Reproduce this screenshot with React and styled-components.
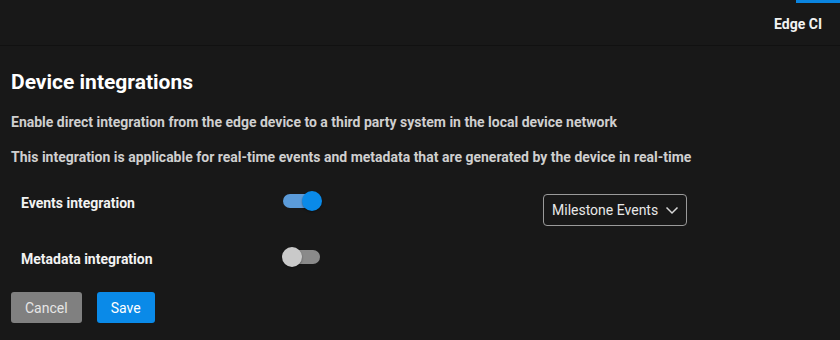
import React from "react";
import styled, { createGlobalStyle } from "styled-components";

const Global = createGlobalStyle`
  html, body { margin: 0; padding: 0; background: #181818; }
  body { font-family: Roboto, "Noto Sans", sans-serif; color: #fff; }
  * { box-sizing: border-box; }
`;

const Page = styled.div`
  width: 840px;
  height: 340px;
  background: #181818;
  overflow: hidden;
`;

const Header = styled.header`
  height: 46px;
  display: flex;
  justify-content: flex-end;
  border-bottom: 1px solid #111;
`;

const Tab = styled.div`
  position: relative;
  padding: 16px 18px 0 15px;
  font-size: 14px;
  font-weight: 700;
  color: #f2f2f2;
  &::before {
    content: "";
    position: absolute;
    top: 0;
    left: 37px;
    right: 0;
    height: 3px;
    background: #0a84e0;
  }
`;

const Content = styled.main`
  padding: 24px 11px 0;
`;

const Title = styled.h1`
  margin: 0 0 19px;
  font-size: 21px;
  font-weight: 700;
  line-height: 25px;
  color: #fff;
`;

const Desc = styled.p`
  margin: 0 0 18px;
  font-size: 14px;
  font-weight: 700;
  line-height: 17px;
  color: #cfcfcf;
`;

const Rows = styled.div`
  display: grid;
  grid-template-columns: 261px 261px auto;
  grid-auto-rows: 56px;
  padding-left: 10px;
  margin-top: 23px;
  align-items: start;
`;

const Label = styled.div`
  font-size: 14px;
  font-weight: 700;
  color: #f2f2f2;
  line-height: 17px;
  padding-top: 6px;
`;

const SwitchWrap = styled.button`
  position: relative;
  width: 40px;
  height: 24px;
  padding: 0;
  border: 0;
  background: transparent;
  cursor: pointer;
  display: flex;
  align-items: center;
`;

const Track = styled.span`
  display: block;
  margin-left: 1px;
  width: 37px;
  height: 14px;
  border-radius: 7px;
  background: ${(p) => (p.$on ? "#5b9bd9" : "#8a8a8a")};
`;

const Thumb = styled.span`
  position: absolute;
  top: 2px;
  left: ${(p) => (p.$on ? "20px" : "0px")};
  width: 20px;
  height: 20px;
  border-radius: 50%;
  background: ${(p) => (p.$on ? "#0a8ae8" : "#c9c9c9")};
  box-shadow: 0 1px 2px rgba(0, 0, 0, 0.4);
`;

const Select = styled.div`
  margin-top: 5px;
  width: 144px;
  height: 32px;
  border: 1px solid #9a9a9a;
  border-radius: 4px;
  display: flex;
  align-items: center;
  justify-content: space-between;
  padding: 0 6px 0 8px;
  font-size: 14px;
  color: #e8e8e8;
`;

const Buttons = styled.div`
  display: flex;
  gap: 15px;
  margin-top: -9px;
`;

const Button = styled.button`
  height: 31px;
  padding: 0 14px;
  border: 0;
  border-radius: 3px;
  font-family: Roboto, sans-serif;
  font-size: 14px;
  color: ${(p) => (p.$primary ? "#fff" : "#e6e6e6")};
  background: ${(p) => (p.$primary ? "#0a8ae8" : "#808080")};
`;

function Switch({ on }) {
  return (
    <SwitchWrap>
      <Track $on={on} />
      <Thumb $on={on} />
    </SwitchWrap>
  );
}

export default function App() {
  return (
    <Page>
      <Global />
      <Header>
        <Tab>Edge CI</Tab>
      </Header>
      <Content>
        <Title>Device integrations</Title>
        <Desc>Enable direct integration from the edge device to a third party system in the local device network</Desc>
        <Desc>This integration is applicable for real-time events and metadata that are generated by the device in real-time</Desc>
        <Rows>
          <Label>Events integration</Label>
          <Switch on />
          <Select>
            Milestone Events
            <svg width="16" height="16" viewBox="0 0 16 16" fill="none">
              <path d="M2.5 5.5 L8 11 L13.5 5.5" stroke="#d8d8d8" strokeWidth="1.5" />
            </svg>
          </Select>
          <Label>Metadata integration</Label>
          <Switch on={false} />
          <div />
        </Rows>
        <Buttons>
          <Button>Cancel</Button>
          <Button $primary>Save</Button>
        </Buttons>
      </Content>
    </Page>
  );
}
